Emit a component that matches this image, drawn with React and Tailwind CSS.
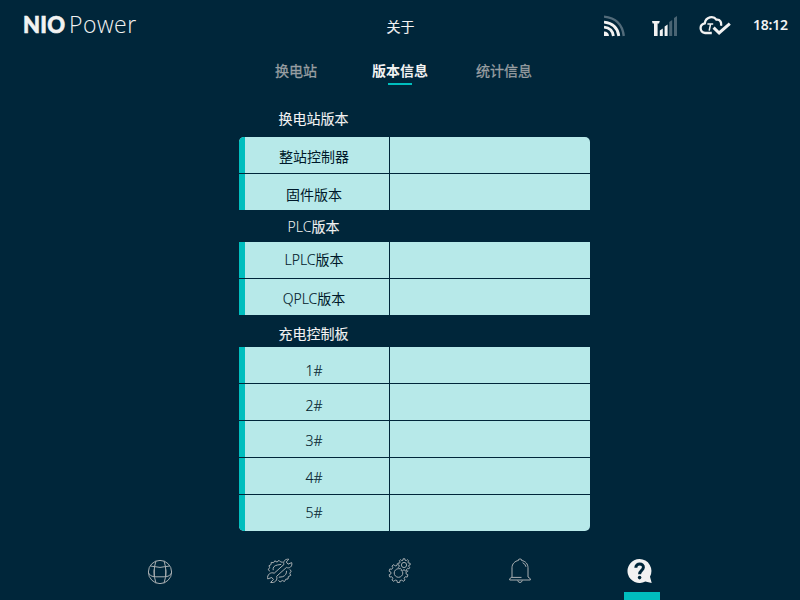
import React from "react";

const CJK = "font-['Noto_Sans','Noto_Sans_CJK_SC',sans-serif]";
const STROKED = "[-webkit-text-stroke:0.3px_currentColor]";
const SOFT_STROKED = "[-webkit-text-stroke:0.1px_currentColor]";

function gearPath(cx, cy, outer, inner, teeth) {
  const step = (Math.PI * 2) / teeth;
  const pt = (r, a) => `${(cx + r * Math.cos(a)).toFixed(2)} ${(cy + r * Math.sin(a)).toFixed(2)}`;
  let d = "";
  for (let i = 0; i < teeth; i++) {
    const a = i * step - Math.PI / 2;
    d += `${i ? "L" : "M"}${pt(inner, a - step * 0.3)}L${pt(outer, a - step * 0.2)}L${pt(outer, a + step * 0.2)}L${pt(inner, a + step * 0.3)}`;
  }
  return d + "Z";
}

function FeedIcon() {
  return (
    <svg className="block" width="22" height="22" viewBox="0 0 22 22" fill="none" stroke="#f2f2f2" strokeWidth="2.8">
      <path d="M0 16.4A5 5 0 0 1 5 21H0Z" fill="#f2f2f2" stroke="none" />
      <path d="M0 12.2Q8.4 13.2 9.4 21" />
      <path d="M0 7.2Q13 8.4 14.8 21" />
      <path d="M0 1.6Q17.6 3.2 19.8 21" stroke="#526b7a" strokeWidth="2.4" />
    </svg>
  );
}

function SignalIcon() {
  return (
    <svg className="block" width="26" height="21" viewBox="0 0 26 21">
      <path d="M0 5H7.8L7 7.4H5.6V20H2V7.4H.6Z" fill="#f2f2f2" />
      <path d="M7.8 14.6L10.8 12.6V20H7.8ZM12.6 10.6L15.6 8.6V20H12.6Z" fill="#f2f2f2" />
      <path d="M17.2 6L20.2 4V20H17.2ZM22 2L25 0V20H22Z" fill="#4a6473" />
    </svg>
  );
}

function CloudIcon() {
  return (
    <svg className="block" width="34" height="20" viewBox="0 0 34 20" fill="none" stroke="#f2f2f2" strokeWidth="2.3">
      <path d="M12.8 17H6.2C.2 16 .1 8.4 5.8 7.3C6.8 .8 14.4 -.6 17.4 3.7C21.4 3.2 22.6 6.5 22 9.8" />
      <path d="M8.4 8.1H14.2M11.6 8L10.2 14.7" strokeWidth="1.5" />
      <path d="M14.6 11.7L20.1 17L30.8 7.7" strokeWidth="3" />
    </svg>
  );
}

function GlobeIcon() {
  return (
    <svg className="block" width="26" height="26" viewBox="0 0 26 26" fill="none" stroke="#a9afb2" strokeWidth="1">
      <circle cx="13" cy="13" r="11.6" />
      <path d="M9 1.9Q5.2 13 9 24.1M17 1.9Q20.8 13 17 24.1M3.4 7Q13 9.8 22.6 7M1.4 14Q3.6 17.6 7 17.8H19Q22.4 17.6 24.6 14M7.2 10.4V18M18.8 10.4V18" />
    </svg>
  );
}

function RepairIcon() {
  return (
    <svg className="block" width="28" height="26" viewBox="0 0 28 26" fill="none" stroke="#a9afb2" strokeWidth="1" strokeLinejoin="round">
      <path d="M8.2 15.2L18 6.4C16.8 3.4 19 .9 22.8 1.2L20.3 4L22 6.2L25.7 4.6C26.8 8.4 23.2 11 20.5 9.4L10.6 18.3C12 22 8.8 25.3 4.6 24.4L7.4 21.5L5.8 19.5L1.7 20.9C.8 16.6 4.7 13.7 8.2 15.2Z" />
      <path d="M3.9 13.2L2.2 11.8L3.7 9.3L2.9 7.8L5.1 6.5L5.2 4.4L7.6 4.7L8.8 2.8L11 4.1L13 2.3L14.7 4L16.8 4.2M7.2 12.2Q6.4 8 11.4 7L15.2 6.4" />
      <path d="M23.9 11.4L25.2 13.2L23.8 15.2L24.7 17.4L22.3 18.7L22 21L19.8 21.2L18.5 23.5L16.3 22.5L14.1 24L12.5 22.3M20.5 12.8Q20.8 17.4 16.3 18.8L12.8 19.2" />
    </svg>
  );
}

function GearsIcon() {
  return (
    <svg className="block" width="24" height="26" viewBox="0 0 24 26" fill="none" stroke="#a0a9ae" strokeWidth="1" strokeLinejoin="round">
      <mask id="behind-small-gear">
        <rect width="24" height="26" fill="white" stroke="none" />
        <circle cx="16" cy="7" r="6.8" fill="black" stroke="none" />
      </mask>
      <g mask="url(#behind-small-gear)">
        <path d={gearPath(10.5, 15, 9.6, 7.7, 10)} />
        <circle cx="10.5" cy="15" r="4.3" />
      </g>
      <path d={gearPath(16, 7, 6.3, 4.9, 9)} />
      <circle cx="16" cy="7" r="2.6" />
    </svg>
  );
}

function BellIcon() {
  return (
    <svg className="block" width="22" height="26" viewBox="0 0 22 26" fill="none" stroke="#a9afb2" strokeWidth="1">
      <path d="M3 19V9.8C3 5.8 6 3 9.4 2.5V1.5Q11 .3 12.6 1.5V2.5C16.4 3 19 6 19 9.8V19L21.3 20.7V22H.7V20.7L3 19ZM3 19.4H12.5M8.7 22.4Q9.2 24.5 11 24.5T13.3 22.4M13.6 4.7Q16.4 5.8 17 8.8" />
    </svg>
  );
}

function HelpIcon() {
  return (
    <svg className="block" width="26" height="26" viewBox="0 0 26 26">
      <path d="M12.5 1A12 12 0 0 1 23 18.7L24.7 25L18.3 23.5A12 12 0 1 1 12.5 1Z" fill="#f2f2f2" />
      <path d="M8.8 9.7C8.8 4.6 16.8 4.8 16.4 9.4C16.2 12.4 12.6 12.4 12.6 16.2" fill="none" stroke="#00263a" strokeWidth="3" />
      <circle cx="12.6" cy="19.6" r="1.8" fill="#00263a" />
    </svg>
  );
}

function Row({ latin, label, pad = "pt-[3px]" }) {
  return (
    <div className="flex h-9 gap-px">
      <div className={`flex w-[150px] items-center justify-center border-l-[6px] border-[#00bebe] bg-[#b7e9e9] pr-[6px] text-[14px] leading-5 text-[#00192a] ${pad}`}>
        <p>
          {latin && <span className={`font-light ${SOFT_STROKED}`}>{latin}</span>}
          {label}
        </p>
      </div>
      <div className="w-[200px] bg-[#b7e9e9]" />
    </div>
  );
}

function Heading({ children, className }) {
  return <h2 className={`w-[149px] text-center text-[14px] leading-5 text-[#f2f2f2] ${className}`}>{children}</h2>;
}

export default function App() {
  return (
    <div className={`flex h-[600px] w-[800px] flex-col overflow-hidden bg-[#00263a] ${CJK}`}>
      <header className="grid h-[54px] grid-cols-[1fr_auto_1fr] items-start text-[#f2f2f2]">
        <div className="flex items-baseline pt-[9px] pl-[23px] leading-[30px]">
          <span className="w-[46px] font-['Lato',sans-serif] text-[22px] font-black tracking-[0.3px] [-webkit-text-stroke:0.6px_currentColor]">NIO</span>
          <span className="font-['Open_Sans',sans-serif] text-[23px] font-light tracking-[0.5px]">Power</span>
        </div>
        <h1 className={`pt-[17px] pl-px text-[14px] leading-5 ${SOFT_STROKED}`}>关于</h1>
        <div className="flex justify-end pr-[12px]">
          <div className="mt-[15px] mr-[26px]"><FeedIcon /></div>
          <div className="mt-4 mr-[21px]"><SignalIcon /></div>
          <div className="mt-4 mr-5"><CloudIcon /></div>
          <span className="mt-[15px] w-[35px] text-[14px] leading-5 font-semibold tracking-[-0.25px]">18:12</span>
        </div>
      </header>

      <nav className="flex h-[55px] pl-[275px] pt-[7px] text-[14px] leading-5 text-[#999fa2]">
        <span className={`w-[97px] ${STROKED}`}>换电站</span>
        <div className="mr-12 flex w-14 flex-col items-center">
          <span className="font-bold text-[#f2f2f2]">版本信息</span>
          <span className="mt-[2px] h-[2px] w-6 bg-[#00bebe]" />
        </div>
        <span className={STROKED}>统计信息</span>
      </nav>

      <main className="ml-[239px] w-[351px]">
        <Heading className={`h-7 ${SOFT_STROKED}`}>换电站版本</Heading>
        <section className="flex flex-col gap-px overflow-hidden rounded-t-[5px]">
          <Row label="整站控制器" />
          <Row label="固件版本" pad="pt-[5px]" />
        </section>
        <Heading className="h-8 pt-[7px]">
          <span className="font-light">PLC</span>
          <span className={SOFT_STROKED}>版本</span>
        </Heading>
        <section className="flex flex-col gap-px">
          <Row latin="LPLC" label="版本" pad="pt-0" />
          <Row latin="QPLC" label="版本" />
        </section>
        <Heading className={`h-8 pt-[9px] ${SOFT_STROKED}`}>充电控制板</Heading>
        <section className="flex flex-col gap-px overflow-hidden rounded-b-[5px]">
          <Row latin="1#" pad="pt-[12px]" />
          <Row latin="2#" pad="pt-[8px]" />
          <Row latin="3#" pad="pt-[4px]" />
          <Row latin="4#" pad="pt-[4px]" />
          <Row latin="5#" pad="pt-0" />
        </section>
      </main>

      <footer className="mt-auto grid h-[42px] grid-cols-5 px-[100px]">
        <div className="flex justify-center pt-px"><GlobeIcon /></div>
        <div className="flex justify-center"><RepairIcon /></div>
        <div className="flex justify-center"><GearsIcon /></div>
        <div className="flex justify-center"><BellIcon /></div>
        <div className="flex flex-col items-center justify-between">
          <HelpIcon />
          <span className="ml-1 h-2 w-9 bg-[#00bebe]" />
        </div>
      </footer>
    </div>
  );
}
